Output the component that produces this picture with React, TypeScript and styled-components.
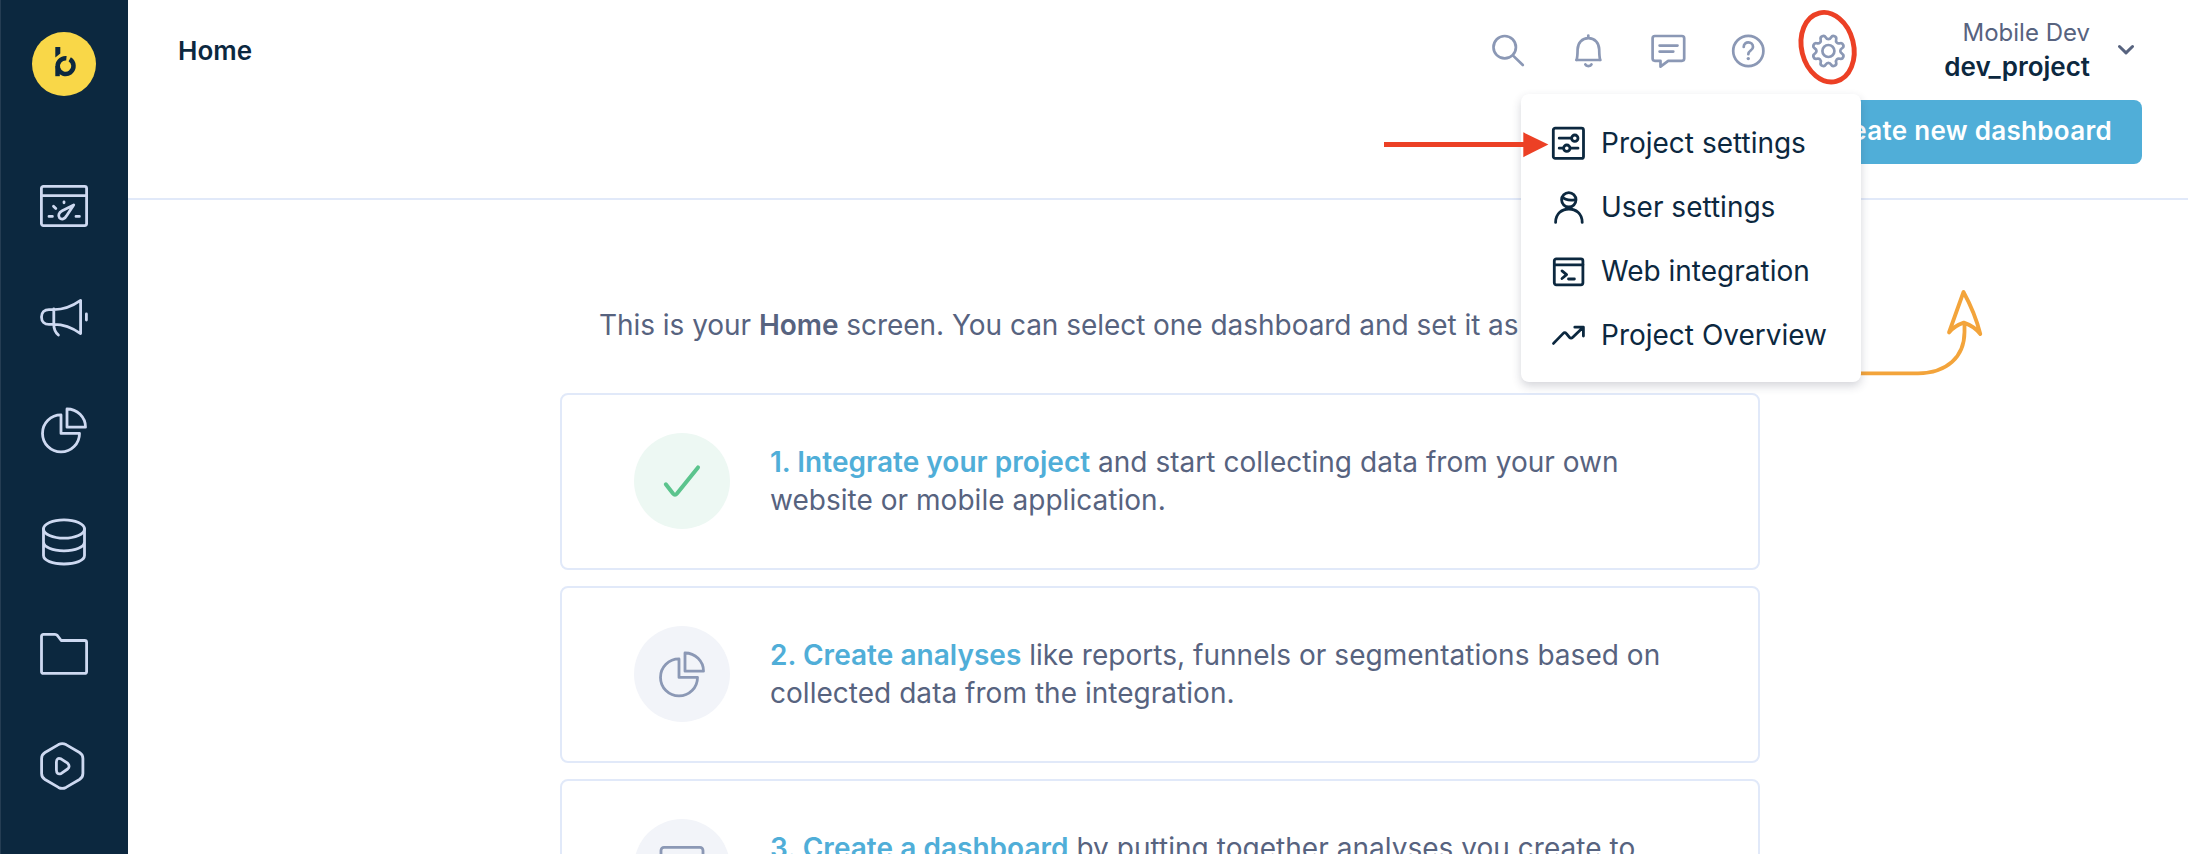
import React from "react";
import styled, { createGlobalStyle } from "styled-components";

const GlobalStyle = createGlobalStyle`
  *, *::before, *::after { box-sizing: border-box; }
  html, body { margin: 0; padding: 0; background: #fff; }
  body { font-family: Inter, "Liberation Sans", sans-serif; -webkit-font-smoothing: antialiased; }
`;

const navy = "#0c283f";
const slate = "#57637f";
const steel = "#8b98b5";
const pale = "#ced9f1";
const line = "#e1e9f9";
const sky = "#50aed8";
const red = "#ec4025";
const orange = "#f3a43b";

const Page = styled.div`
  position: relative;
  display: flex;
  width: 2188px;
  height: 854px;
  overflow: hidden;
`;

const Sidebar = styled.aside`
  flex: none;
  width: 128px;
  height: 854px;
  padding-top: 32px;
  display: flex;
  flex-direction: column;
  align-items: center;
  background: ${navy};
  box-shadow: inset 1px 0 0 #253d53;
`;

const Nav = styled.nav`
  margin-top: 86px;
  display: flex;
  flex-direction: column;
  gap: 64px;
`;

const Icon = styled.svg<{ $size: number; $color: string; $stroke?: number }>`
  display: block;
  flex: none;
  width: ${(p) => p.$size}px;
  height: ${(p) => p.$size}px;
  fill: none;
  stroke: ${(p) => p.$color};
  stroke-width: ${(p) => p.$stroke ?? 2.8};
  stroke-linecap: round;
  stroke-linejoin: round;
`;

const Main = styled.main`
  flex: 1;
  min-width: 0;
`;

const Header = styled.header`
  height: 200px;
  border-bottom: 2px solid ${line};
`;

const TopBar = styled.div`
  height: 100px;
  padding: 0 54px 0 50px;
  display: flex;
  align-items: center;
`;

const Title = styled.h1`
  margin: 2px auto 0 0;
  font-size: 26px;
  line-height: 32px;
  font-weight: 600;
  color: ${navy};
`;

const Tools = styled.div`
  display: flex;
  gap: 40px;
  margin-top: 2px;
`;

const Account = styled.div`
  width: 242px;
  text-align: right;
  font-size: 24px;
  line-height: 34px;
  color: ${slate};
`;

const Project = styled.div`
  font-size: 26px;
  font-weight: 600;
  color: ${navy};
`;

const Chevron = styled(Icon)`
  margin-left: 28px;
`;

const Actions = styled.div`
  display: flex;
  justify-content: flex-end;
  padding-right: 46px;
`;

const Button = styled.button`
  height: 64px;
  padding: 0 30px 2px 31px;
  border: 0;
  border-radius: 8px;
  background: ${sky};
  color: #fff;
  font: 600 26px/32px Inter, sans-serif;
  letter-spacing: 0.3px;
`;

const Content = styled.section`
  width: 1200px;
  margin: 0 auto 0 432px;
  padding-top: 106px;
`;

const Intro = styled.p`
  margin: 0 0 49px;
  padding-left: 39px;
  font-size: 28px;
  line-height: 38px;
  letter-spacing: -0.04px;
  white-space: nowrap;
  color: ${slate};
  b { font-weight: 600; }
`;

const Card = styled.article`
  height: 177px;
  margin-bottom: 16px;
  padding: 0 72px 2px;
  display: flex;
  align-items: center;
  border: 2px solid ${line};
  border-radius: 8px;
`;

const Badge = styled.div<{ $bg: string }>`
  flex: none;
  width: 96px;
  height: 96px;
  margin-right: 40px;
  border-radius: 50%;
  display: flex;
  align-items: center;
  justify-content: center;
  background: ${(p) => p.$bg};
`;

const CardText = styled.p`
  margin: 0;
  font-size: 28px;
  line-height: 38px;
  letter-spacing: 0.03px;
  white-space: nowrap;
  color: ${slate};
  b { font-weight: 600; color: ${sky}; }
`;

const Menu = styled.ul`
  position: absolute;
  left: 1521px;
  top: 94px;
  width: 340px;
  height: 288px;
  margin: 0;
  padding: 17px 0 15px;
  list-style: none;
  border-radius: 8px;
  background: #fff;
  box-shadow: 0 4px 10px rgba(40, 45, 70, 0.2);
`;

const MenuItem = styled.li`
  height: 64px;
  padding-left: 27px;
  display: flex;
  align-items: center;
  gap: 12px;
  font-size: 28px;
  white-space: nowrap;
  color: ${navy};
`;

const Overlay = styled.svg<{ $x: number; $y: number }>`
  position: absolute;
  left: ${(p) => p.$x}px;
  top: ${(p) => p.$y}px;
  fill: none;
  overflow: visible;
`;

// Eight-toothed cog outline, rounded by curving through the edge midpoints.
const gearPath = (() => {
  const pts: [number, number][] = [];
  for (let i = 0; i < 8; i++) {
    const a = i * 45 + 22.5;
    for (const [d, r] of [[-8.5, 16.2], [8.5, 16.2], [14.5, 12], [30.5, 12]]) {
      const t = ((a + d) * Math.PI) / 180;
      pts.push([20 + r * Math.cos(t), 20 + r * Math.sin(t)]);
    }
  }
  const mid = (i: number) => {
    const p = pts[i % pts.length];
    const q = pts[(i + 1) % pts.length];
    return `${((p[0] + q[0]) / 2).toFixed(2)} ${((p[1] + q[1]) / 2).toFixed(2)}`;
  };
  let d = `M${mid(pts.length - 1)}`;
  pts.forEach((p, i) => {
    d += `Q${p[0].toFixed(2)} ${p[1].toFixed(2)} ${mid(i)}`;
  });
  return d + "Z";
})();

const Pie = () => (
  <>
    <path d="M21 8.9A18.5 18.5 0 1 0 39.5 27.4H21Z" />
    <path d="M27 3V21.2H45.5A18.5 18.2 0 0 0 27 3Z" />
  </>
);

const NavIcon = ({ children }: { children: React.ReactNode }) => (
  <Icon $size={48} $color={pale} viewBox="0 0 48 48">{children}</Icon>
);
const ToolIcon = ({ children }: { children: React.ReactNode }) => (
  <Icon $size={40} $color={steel} $stroke={2.7} viewBox="0 0 40 40">{children}</Icon>
);
const MenuIcon = ({ children }: { children: React.ReactNode }) => (
  <Icon $size={41} $color={navy} $stroke={2.8} viewBox="0 0 41 41">{children}</Icon>
);

export default function App() {
  return (
    <Page>
      <GlobalStyle />
      <Sidebar>
        <Icon $size={64} $color={navy} viewBox="0 0 64 64">
          <circle cx="32" cy="32" r="32" fill="#f9d748" stroke="none" />
          <path d="M23.3 15H28.3V21.5L23.3 25.5Z" fill={navy} stroke="none" />
          <path d="M23.3 34H27.8V44.2H23.3Z" fill={navy} stroke="none" />
          <path d="M37.7 27.3A7.9 7.9 0 1 1 34.4 26.2" strokeWidth="4.5" strokeLinecap="butt" />
        </Icon>
        <Nav>
          <NavIcon>
            <rect x="1.4" y="4.4" width="45.2" height="39.2" rx="2" />
            <path d="M2 13.6H46M24 19.8V20.8M13.5 24.3L15.8 26.6M9 34.4H12.4M36 34.4H39.4" />
            <path d="M40.5 23.7L29 29.4C25.5 31.1 24.7 34.5 26.3 36.5C28.2 38.7 31.8 37.9 33.4 34.4Z" transform="translate(-6.8 -.7)" />
          </NavIcon>
          <NavIcon>
            <path d="M13.8 14.8V31.2M13.8 15.6H9C4.5 15.6 1.5 18.5 1.5 23C1.5 27.5 4.5 30.4 9 30.4H13.8M13.8 15.6C23 15.6 32 12.5 40.6 6.4V39.6C32 33.5 23 30.4 13.8 30.4C13.8 35 15.5 38.4 18.4 41M46.4 20V26" />
          </NavIcon>
          <NavIcon><Pie /></NavIcon>
          <NavIcon>
            <ellipse cx="24" cy="11" rx="20.5" ry="9.2" />
            <path d="M3.5 11V37.6C3.5 42.5 12.5 46 24 46S44.5 42.5 44.5 37.6V11M3.5 24C3.5 29 12.5 32.8 24 32.8S44.5 29 44.5 24" />
          </NavIcon>
          <NavIcon>
            <path d="M1.5 6.4Q1.5 4.4 3.5 4.4H15Q16.5 4.4 17.4 5.5L21.2 10.5H44.6Q46.6 10.5 46.6 12.5V41.4Q46.6 43.4 44.6 43.4H3.5Q1.5 43.4 1.5 41.4Z" />
          </NavIcon>
          <NavIcon>
            <path d="M18.5 2.6Q22.2 .6 26 2.6L39.5 10.5Q42.9 12.6 42.9 16.5V31.5Q42.9 35.4 39.5 37.5L26 45.4Q22.2 47.4 18.5 45.4L5 37.5Q1.6 35.4 1.6 31.5V16.5Q1.6 12.6 5 10.5Z" />
            <path d="M16.4 20V28Q16.6 33 21 31.6L27.6 27Q30.6 24.2 27.6 21.2L21 16.9Q16.6 15.2 16.4 20Z" />
          </NavIcon>
        </Nav>
      </Sidebar>

      <Main>
        <Header>
          <TopBar>
            <Title>Home</Title>
            <Tools>
              <ToolIcon>
                <circle cx="16.7" cy="16.2" r="11.2" />
                <path d="M24.8 24.4L34.8 34" />
              </ToolIcon>
              <ToolIcon>
                <path d="M20.3 4.6V7.2M8.3 29H32.4M8.6 29C9.5 26 9.5 23.5 9.6 18.4C9.8 11.8 14 7.2 20.4 7.2S31 11.8 31.2 18.4C31.3 23.5 31.3 26 32.2 29M17.3 33.4C18.3 35.6 22.5 35.6 23.5 33.4" />
              </ToolIcon>
              <ToolIcon>
                <path transform="translate(.9 .6)" d="M6 4.4H33Q35.3 4.4 35.3 6.6V27Q35.3 29.2 33 29.2H19.3L11.6 35V29.2H6Q3.7 29.2 3.7 27V6.6Q3.7 4.4 6 4.4ZM10.7 14H28.6M10.7 20H24.4" />
              </ToolIcon>
              <ToolIcon>
                <circle cx="20.3" cy="20" r="15.1" />
                <path d="M15.7 16C15.7 9.7 25 10 25 15.9C25 19.6 20.3 19.5 20.3 23.2" />
                <circle cx="20.3" cy="27.6" r="1.7" fill={steel} stroke="none" />
              </ToolIcon>
              <ToolIcon>
                <path d={gearPath} transform="translate(.4 0)" />
                <circle cx="20.4" cy="20" r="6" />
              </ToolIcon>
            </Tools>
            <Account>
              Mobile Dev
              <Project>dev_project</Project>
            </Account>
            <Chevron $size={16} $color={slate} $stroke={3} viewBox="0 0 16 16">
              <path d="M1.5 4.5L8 10.8L14.5 4.5" />
            </Chevron>
          </TopBar>
          <Actions>
            <Button>Create new dashboard</Button>
          </Actions>
        </Header>

        <Content>
          <Intro>
            This is your <b>Home</b> screen. You can select one dashboard and set it as
          </Intro>
          <Card>
            <Badge $bg="#edf8f3">
              <Icon $size={48} $color="#5bc48d" $stroke={4} viewBox="0 0 48 48">
                <path d="M7.8 27.3L15 36.5Q17 38.8 19 36.5L40 10.4" />
              </Icon>
            </Badge>
            <CardText>
              <b>1. Integrate your project</b> and start collecting data from your own<br />
              website or mobile application.
            </CardText>
          </Card>
          <Card>
            <Badge $bg="#f2f4f9">
              <Icon $size={48} $color={steel} viewBox="0 0 48 48"><Pie /></Icon>
            </Badge>
            <CardText>
              <b>2. Create analyses</b> like reports, funnels or segmentations based on<br />
              collected data from the integration.
            </CardText>
          </Card>
          <Card>
            <Badge $bg="#f2f4f9">
              <Icon $size={48} $color={steel} viewBox="0 0 48 48">
                <rect x="3" y="4.4" width="42" height="36" rx="3" />
              </Icon>
            </Badge>
            <CardText>
              <b>3. Create a dashboard</b> by putting together analyses you create to<br />
              &nbsp;
            </CardText>
          </Card>
        </Content>
      </Main>

      <Overlay $x={1840} $y={288} width="144" height="90" stroke={orange} strokeWidth="3.8" strokeLinecap="round" strokeLinejoin="round">
        <path d="M0 85.4H78C107 85 124.3 69 124.5 44V35M123.5 4L109 44.5Q114 38 123.8 34.6Q134 38 140.3 46Q135 25 123.5 4Z" />
      </Overlay>

      <Menu>
        <MenuItem>
          <MenuIcon>
            <rect x="5.3" y="5.2" width="30.2" height="30.2" rx="2" />
            <path d="M11.2 15.2H23M11.2 25.2H14.5M23 25.2H30" />
            <circle cx="26.8" cy="15.2" r="3.2" />
            <circle cx="18.8" cy="25.2" r="3.2" />
          </MenuIcon>
          Project settings
        </MenuItem>
        <MenuItem>
          <MenuIcon>
            <circle cx="20.8" cy="12.8" r="7.2" />
            <path d="M14.6 10.2C17.6 14 23 13.2 27.5 12.8M7.6 35.4C7.6 17.5 34.2 17.5 34.2 35.4" />
          </MenuIcon>
          User settings
        </MenuItem>
        <MenuItem>
          <MenuIcon>
            <rect x="6.3" y="7.8" width="28.6" height="26" rx="2" />
            <path d="M6.3 13.8H34.9M14 19.9L18.6 23.7L14 27.5M20.5 28H26.4" />
          </MenuIcon>
          Web integration
        </MenuItem>
        <MenuItem>
          <MenuIcon>
            <path d="M5.5 28.4L15 18.6Q16.7 16.8 18.4 18.6L21.3 22.2Q23 23.8 24.8 22.2L35.2 12.2M26.8 12.2H35.4V21" />
          </MenuIcon>
          Project Overview
        </MenuItem>
      </Menu>

      <Overlay $x={1384} $y={132} width="165" height="26">
        <path d="M0 12.4H142" stroke={red} strokeWidth="5" />
        <path d="M139.3 .3L164.4 12.6L139.3 25.2Z" fill={red} />
      </Overlay>
      <Overlay $x={1798} $y={10} width="60" height="75">
        <ellipse cx="29.6" cy="37.2" rx="26" ry="35.2" transform="rotate(-14 29.6 37.2)" stroke={red} strokeWidth="4.9" />
      </Overlay>
    </Page>
  );
}
